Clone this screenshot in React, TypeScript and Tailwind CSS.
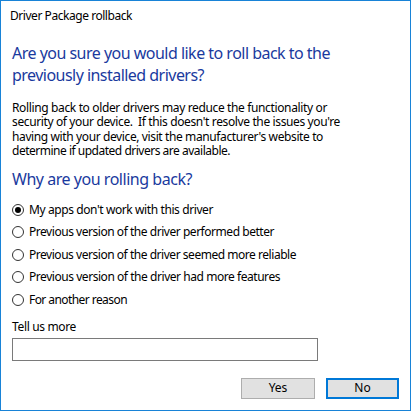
import React, { useLayoutEffect, useRef, useState } from "react";

function Fit({ text, w, className = "" }: { text: string; w: number; className?: string }) {
  const ref = useRef<HTMLSpanElement>(null);
  const [ls, setLs] = useState(0);
  useLayoutEffect(() => {
    const measure = () => {
      const el = ref.current;
      if (!el) return;
      const prev = el.style.letterSpacing;
      el.style.letterSpacing = "0px";
      const nat = el.getBoundingClientRect().width;
      el.style.letterSpacing = prev;
      setLs((w - nat) / text.length);
    };
    measure();
    if (document.fonts && document.fonts.ready) {
      document.fonts.ready.then(measure);
    }
  }, [text, w]);
  return (
    <span ref={ref} className={`inline-block whitespace-pre ${className}`} style={{ letterSpacing: `${ls}px` }}>
      {text}
    </span>
  );
}

const options: [string, number][] = [
  ["My apps don't work with this driver", 184],
  ["Previous version of the driver performed better", 245],
  ["Previous version of the driver seemed more reliable", 267],
  ["Previous version of the driver had more features", 251],
  ["For another reason", 98],
];

const para: [string, number][] = [
  ["Rolling back to older drivers may reduce the functionality or", 315],
  ["security of your device.  If this doesn't resolve the issues you're", 328],
  ["having with your device, visit the manufacturer's website to", 311],
  ["determine if updated drivers are available.", 218],
];

function Radio({ checked }: { checked: boolean }) {
  return (
    <span className="flex h-[12px] w-[12px] shrink-0 items-center justify-center rounded-full border border-[#333333] bg-white">
      {checked && <span className="h-[6px] w-[6px] rounded-full bg-[#000000]" />}
    </span>
  );
}

export default function App() {
  return (
    <div
      className="flex h-[411px] w-[411px] flex-col border border-[#1883d7] bg-white pl-[11px] text-[12px] text-black"
      style={{ fontFamily: '"Noto Sans", "Open Sans", sans-serif' }}
    >
      <div className="mt-[7px] -ml-[2px] h-[16px] leading-[16px]">
        <Fit text="Driver Package rollback" w={122} />
      </div>
      <div className="mt-[18px] flex flex-col text-[16px] leading-[22px] text-[#1a3a9e]">
        <div>
          <Fit text="Are you sure you would like to roll back to the" w={318} />
        </div>
        <div>
          <Fit text="previously installed drivers?" w={192} />
        </div>
      </div>
      <div className="mt-[15px] flex flex-col leading-[14.4px]">
        {para.map(([t, w]) => (
          <div key={t} className="h-[14.4px]">
            <Fit text={t} w={w} />
          </div>
        ))}
      </div>
      <div className="mt-[9.5px] text-[16px] leading-[22px] text-[#1a3a9e]">
        <Fit text="Why are you rolling back?" w={180} />
      </div>
      <div className="mt-[8.5px] flex flex-col">
        {options.map(([o, w], i) => (
          <label key={o} className="flex h-[22.5px] items-center gap-[5px]">
            <Radio checked={i === 0} />
            <span className="leading-[16px]">
              <Fit text={o} w={w} />
            </span>
          </label>
        ))}
      </div>
      <div className="mt-[8px] h-[16px] leading-[16px]">
        <Fit text="Tell us more" w={64} />
      </div>
      <div className="mt-[2.5px] h-[23px] w-[306px] border border-[#7a7a7a] bg-white" />
      <div className="mt-[17px] flex justify-end gap-[11px] pr-[11px]">
        <button className="flex h-[21px] w-[74px] items-center justify-center border border-[#adadad] bg-[#e1e1e1] leading-[16px]">
          Yes
        </button>
        <button className="flex h-[21px] w-[73px] items-center justify-center border-2 border-[#0078d7] bg-[#e1e1e1] leading-[16px]">
          No
        </button>
      </div>
    </div>
  );
}
